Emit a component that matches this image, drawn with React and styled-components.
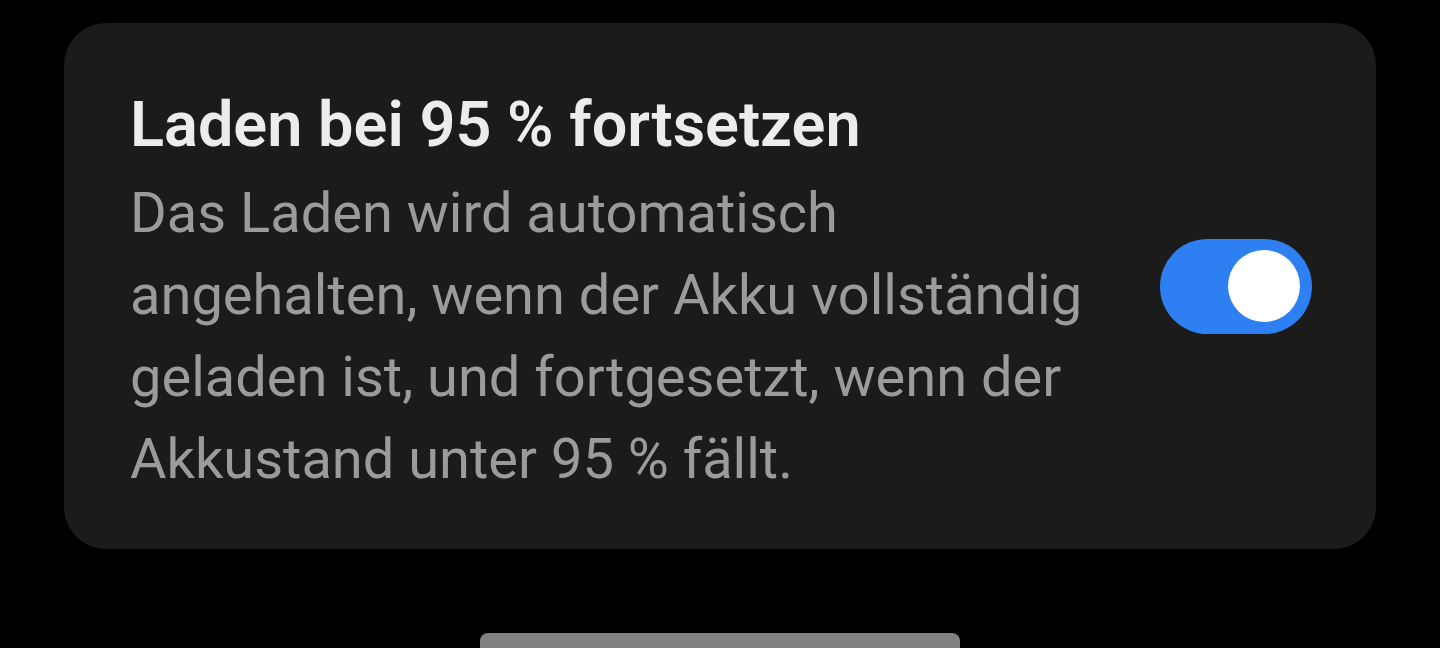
import React from "react";
import styled, { createGlobalStyle } from "styled-components";

const Global = createGlobalStyle`
  html, body { margin: 0; padding: 0; background: #000; }
  body { font-family: Roboto, "Noto Sans", "Liberation Sans", sans-serif; }
  #root { width: 1440px; height: 648px; }
`;

const Screen = styled.div`
  width: 1440px;
  height: 648px;
  background: #000;
  display: flex;
  flex-direction: column;
  align-items: center;
  padding-top: 23px;
  box-sizing: border-box;
  overflow: hidden;
`;

const Card = styled.div`
  width: 1312px;
  height: 526px;
  box-sizing: border-box;
  background: #1b1b1b;
  border-radius: 42px;
  padding: 0 64px 0 66px;
  display: flex;
  align-items: center;
  gap: 40px;
`;

const TextCol = styled.div`
  flex: 1;
  display: flex;
  flex-direction: column;
  margin-top: 5px;
`;

const Title = styled.div`
  color: #ececec;
  font-size: 63px;
  font-weight: 600;
  line-height: 95px;
`;

const Desc = styled.div`
  color: #9b9b9b;
  font-size: 56px;
  font-weight: 400;
  line-height: 82px;
`;

const Track = styled.div`
  width: 152px;
  height: 95px;
  border-radius: 48px;
  background: ${(p) => (p.$on ? "#2e7ff1" : "#555")};
  display: flex;
  align-items: center;
  justify-content: ${(p) => (p.$on ? "flex-end" : "flex-start")};
  padding: 0 12px;
  box-sizing: border-box;
  flex-shrink: 0;
`;

const Knob = styled.div`
  width: 72px;
  height: 72px;
  border-radius: 50%;
  background: #fff;
`;

const HomeBar = styled.div`
  margin-top: auto;
  width: 480px;
  height: 15px;
  border-radius: 8px 8px 0 0;
  background: #808080;
`;

export default function App() {
  return (
    <>
      <Global />
      <Screen>
        <Card>
          <TextCol>
            <Title>Laden bei 95 % fortsetzen</Title>
            <Desc>
              Das Laden wird automatisch
              <br />
              angehalten, wenn der Akku vollständig
              <br />
              geladen ist, und fortgesetzt, wenn der
              <br />
              Akkustand unter 95 % fällt.
            </Desc>
          </TextCol>
          <Track $on>
            <Knob />
          </Track>
        </Card>
        <HomeBar />
      </Screen>
    </>
  );
}
